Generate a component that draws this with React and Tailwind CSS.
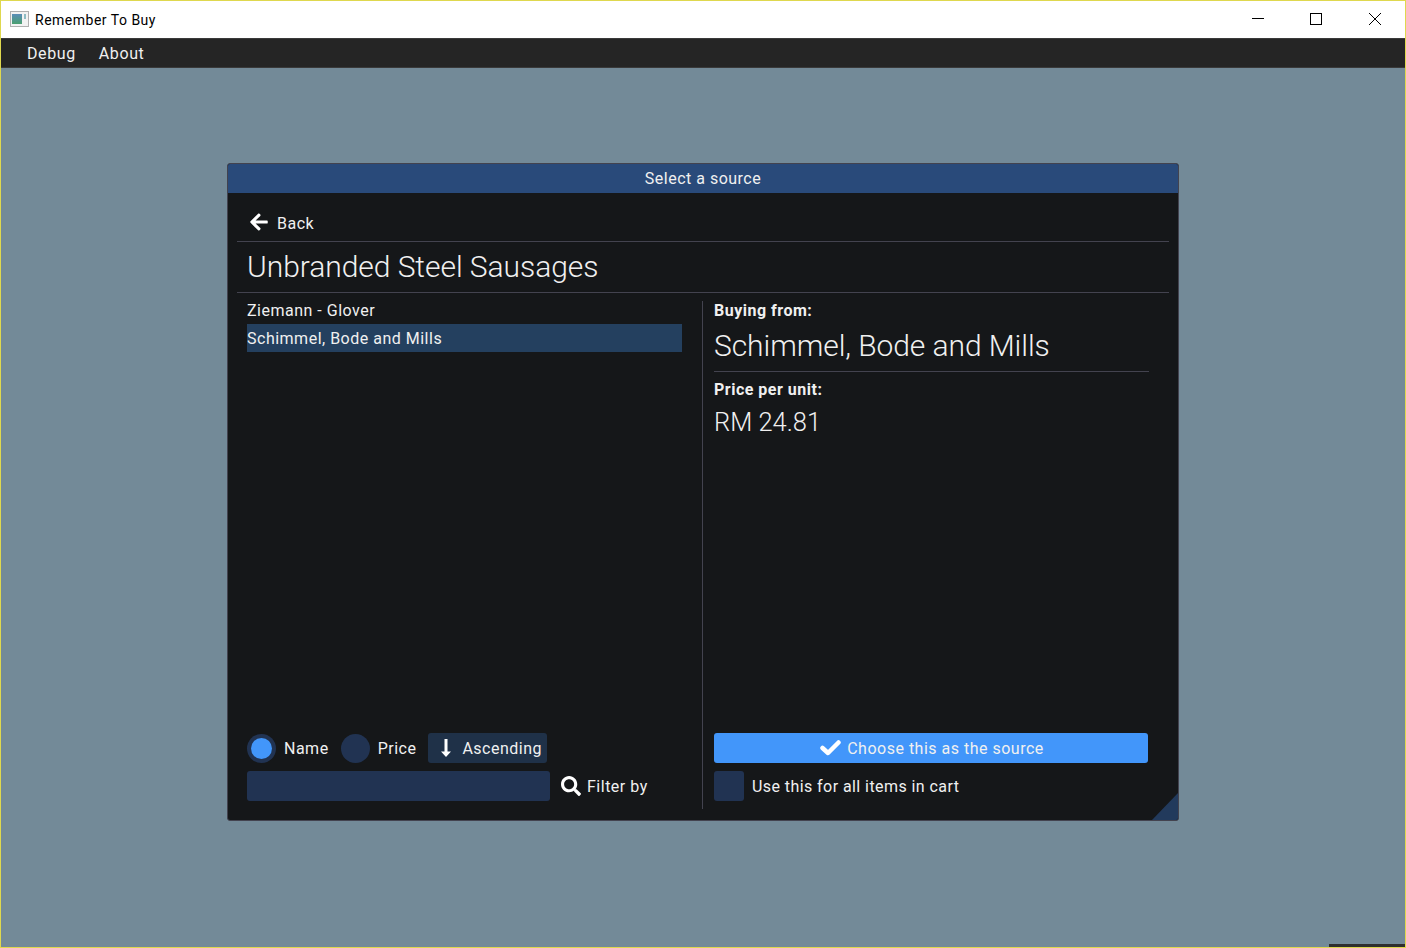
import { FaArrowLeft, FaSearch } from "react-icons/fa";

const TitleBar = () => (
  <div className="flex h-[37px] items-center bg-white pl-[9px]">
    <svg width="19" height="16" viewBox="0 0 19 16" className="mr-[6px] mb-[1px]">
      <defs>
        <linearGradient id="appIcon" x1="0" y1="0" x2="0" y2="1">
          <stop offset="0" stopColor="#5a8db8" />
          <stop offset="1" stopColor="#4aa070" />
        </linearGradient>
      </defs>
      <rect x="0.5" y="0.5" width="18" height="15" fill="#f2f2f2" stroke="#b0b0b0" />
      <rect x="2" y="3" width="10" height="10" fill="url(#appIcon)" />
      <rect x="14" y="3" width="2" height="5" fill="#8fbcc4" />
    </svg>
    <span className="text-[14px] leading-none tracking-[0.5px] text-black">Remember To Buy</span>
    <div className="ml-auto flex items-center pb-[2px]">
      <button className="flex h-[35px] w-[58px] items-center justify-center">
        <span className="h-px w-3 bg-black" />
      </button>
      <button className="flex h-[35px] w-[58px] items-center justify-center">
        <span className="h-3 w-3 border border-black" />
      </button>
      <button className="flex h-[35px] w-[60px] items-center justify-center">
        <svg width="12" height="12" viewBox="0 0 12 12">
          <path d="M0 0L12 12M12 0L0 12" stroke="#000" strokeWidth="1" />
        </svg>
      </button>
    </div>
  </div>
);

const MenuBar = () => (
  <div className="flex h-[30px] items-center gap-[23px] border-y border-[#3a3a3a] bg-[#252525] pl-[26px] pt-[2px] text-[16px] tracking-[0.6px] text-[#f0f0f0]">
    <span>Debug</span>
    <span>About</span>
  </div>
);

const Radio = ({ selected }) => (
  <span className="flex h-[29px] w-[29px] items-center justify-center rounded-full bg-[#213352]">
    {selected && <span className="h-[21px] w-[21px] rounded-full bg-[#4296fa]" />}
  </span>
);

// font awesome 4 style icons, the package only has the newer shapes
const ArrowDown = () => (
  <svg width="10" height="18" viewBox="0 0 10 18" fill="#fff">
    <path d="M3.5 0h3v12.5H10L5 18 0 12.5h3.5z" />
  </svg>
);

const CheckIcon = () => (
  <svg width="21" height="16" viewBox="0 0 21 16" fill="none" stroke="#fff" strokeWidth="4.5" strokeLinecap="round" strokeLinejoin="round">
    <path d="M2.5 8l5.5 5L18.5 2.5" />
  </svg>
);

const LeftPane = () => (
  <div className="flex w-[456px] flex-col border-r border-[#43434f] pr-5">
    <div className="flex h-[18px] items-center pt-[2px] leading-none">Ziemann - Glover</div>
    <div className="mt-[5px] flex h-[28px] items-center bg-[#24405f] pt-[2px] leading-none">Schimmel, Bode and Mills</div>

    <div className="mt-auto flex h-[30px] items-center">
      <Radio selected />
      <span className="ml-[8px] pt-[2px]">Name</span>
      <span className="ml-[12px]"><Radio /></span>
      <span className="ml-[8px] pt-[2px]">Price</span>
      <div className="ml-[12px] flex h-[30px] w-[119px] items-center rounded-[3px] bg-[#1f3148] pl-[13px]">
        <ArrowDown />
        <span className="ml-[11px] pt-[2px]">Ascending</span>
      </div>
    </div>
    <div className="mt-[8px] mb-[8px] flex h-[30px] items-center">
      <div className="h-[30px] w-[303px] rounded-[3px] bg-[#213352]" />
      <FaSearch className="ml-[11px] h-[20px] w-[20px] text-white" />
      <span className="ml-[6px] pt-[2px]">Filter by</span>
    </div>
  </div>
);

const RightPane = () => (
  <div className="flex flex-1 flex-col pl-[11px] pr-[20px]">
    <div className="flex h-[18px] items-center pt-[2px] font-bold leading-none">Buying from:</div>
    <div className="mt-[9px] flex h-[44px] items-center border-b border-[#43434f] pb-2 text-[30px] font-light leading-none tracking-[-0.08px]">
      Schimmel, Bode and Mills
    </div>
    <div className="mt-[9px] flex h-[18px] items-center font-bold leading-none">Price per unit:</div>
    <div className="mt-[6px] text-[25.5px] font-light leading-[34px] tracking-normal">RM 24.81</div>

    <button className="mt-auto flex h-[30px] w-[434px] items-center justify-center rounded-[3px] bg-[#4296fa] pl-[2px] text-[#f0f0f0]">
      <CheckIcon />
      <span className="ml-[6px] pt-[2px]">Choose this as the source</span>
    </button>
    <div className="mt-[8px] mb-[8px] flex h-[30px] items-center">
      <span className="h-[30px] w-[30px] rounded-[3px] bg-[#213352]" />
      <span className="ml-[8px] pt-[2px] tracking-[0.43px]">Use this for all items in cart</span>
    </div>
  </div>
);

const SelectSourceModal = () => (
  <div className="relative flex h-[658px] w-[952px] flex-col overflow-hidden rounded-[3px] border border-[#43434f] bg-[#151719] text-[16px] tracking-[0.5px] text-[#f0f0f0]">
    <div className="flex h-[29px] shrink-0 items-center justify-center bg-[#294a7a]">Select a source</div>

    <div className="flex flex-1 flex-col px-[9px]">
      <div className="flex h-[49px] items-center border-b border-[#43434f] pl-[12px] pt-[10px]">
        <FaArrowLeft className="h-[20px] w-[20px] text-white" />
        <span className="ml-[8px] pt-[4px]">Back</span>
      </div>
      <div className="flex h-[51px] items-center border-b border-[#43434f] pl-[10px] text-[30px] font-light leading-none tracking-[-0.05px]">
        Unbranded Steel Sausages
      </div>
      <div className="flex flex-1 pl-[10px] pt-[8px] pb-[11px]">
        <LeftPane />
        <RightPane />
      </div>
    </div>

    <svg width="26" height="27" viewBox="0 0 26 27" className="absolute bottom-0 right-0">
      <polygon points="26,0 26,27 0,27" fill="#223a5c" />
    </svg>
  </div>
);

export default function App() {
  return (
    <div className="relative flex h-[948px] w-[1406px] flex-col overflow-hidden border border-[#dfd84e] font-['Roboto',sans-serif]">
      <TitleBar />
      <MenuBar />
      <div className="flex flex-1 justify-center bg-[#738a98] pt-[95px]">
        <SelectSourceModal />
      </div>
      <div className="absolute -bottom-px right-0 h-[4px] w-[76px] bg-[#2e2e2e]" />
    </div>
  );
}
